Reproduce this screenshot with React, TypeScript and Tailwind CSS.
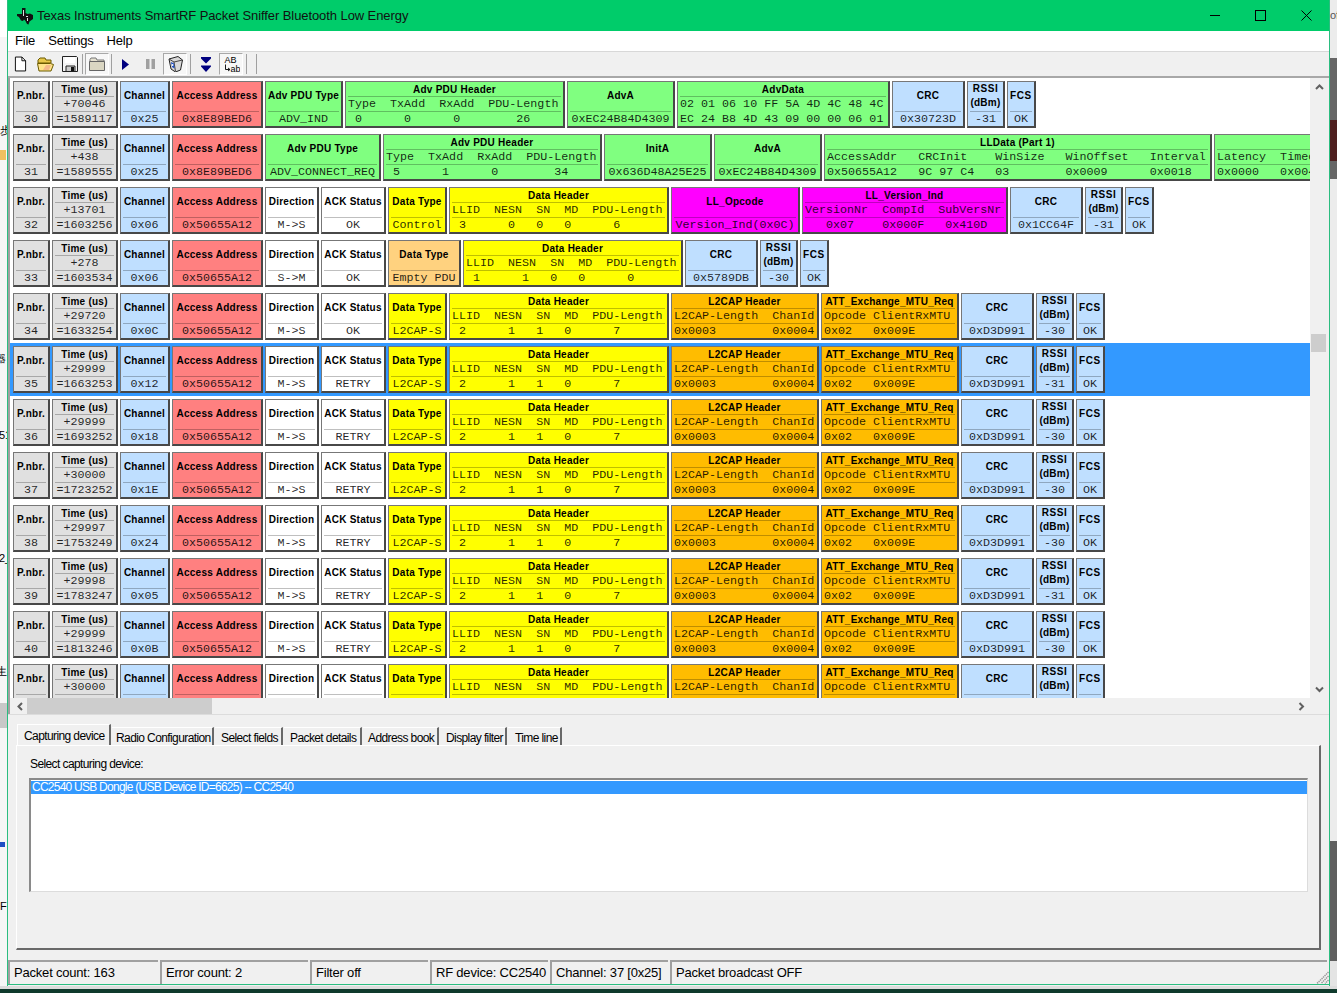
import React from 'react';

type Cell =
  | { kind: 'simple'; w: string; bg: string; title: React.ReactNode; value: string }
  | { kind: 'time'; delta: string; abs: string }
  | { kind: 'field'; w: string; bg: string; title: string; labels: string; values: string; noLine?: boolean };

const GRAY = 'bg-[#e0e0e0]';
const BLUE = 'bg-[#bfdfff]';
const RED = 'bg-[#ff8080]';
const GREEN = 'bg-[#80ff80]';
const WHITE = 'bg-white';
const YELLOW = 'bg-[#ffff00]';
const ORANGE = 'bg-[#ffbc00]';
const PEACH = 'bg-[#ffd27f]';
const MAGENTA = 'bg-[#ff00ff]';

const simple = (w: string, bg: string, title: React.ReactNode, value: string): Cell => ({ kind: 'simple', w, bg, title, value });
const field = (w: string, bg: string, title: string, labels: string, values: string, noLine?: boolean): Cell => ({ kind: 'field', w, bg, title, labels, values, noLine });

const rssiTitle = (
  <>
    <span className="block tracking-[0.6px]">RSSI</span>
    <span className="block">(dBm)</span>
  </>
);

const head = (n: number, delta: string, abs: string, ch: string, addr: string): Cell[] => [
  simple('w-[37px]', GRAY, 'P.nbr.', String(n)),
  { kind: 'time', delta, abs },
  simple('w-[50px]', BLUE, 'Channel', ch),
  simple('w-[91px]', RED, 'Access Address', addr),
];

const tail = (crc: string, rssi: string): Cell[] => [
  simple('w-[73px]', BLUE, 'CRC', crc),
  simple('w-[38px]', BLUE, rssiTitle, rssi),
  simple('w-[29px]', BLUE, <span className="tracking-[0.6px]">FCS</span>, 'OK'),
];

const link = (dir: string, ack: string): Cell[] => [
  simple('w-[54px]', WHITE, 'Direction', dir),
  simple('w-[65px]', WHITE, 'ACK Status', ack),
];

const dataHeader = (values: string): Cell =>
  field('w-[220px]', YELLOW, 'Data Header', 'LLID  NESN  SN  MD  PDU-Length', values);

const attRow = (n: number, delta: string, abs: string, ch: string, ack: string, rssi: string): Cell[] => [
  ...head(n, delta, abs, ch, '0x50655A12'),
  ...link('M->S', ack),
  simple('w-[59px]', YELLOW, 'Data Type', 'L2CAP-S'),
  dataHeader(' 2      1   1   0      7'),
  field('w-[148px]', ORANGE, 'L2CAP Header', 'L2CAP-Length  ChanId', '0x0003        0x0004'),
  field('w-[138px]', ORANGE, 'ATT_Exchange_MTU_Req', 'Opcode ClientRxMTU', '0x02   0x009E'),
  ...tail('0xD3D991', rssi),
];

const rows: { cells: Cell[]; selected?: boolean }[] = [
  {
    cells: [
      ...head(30, '+70046', '=1589117', '0x25', '0x8E89BED6'),
      simple('w-[78px]', GREEN, 'Adv PDU Type', 'ADV_IND'),
      field('w-[220px]', GREEN, 'Adv PDU Header', 'Type  TxAdd  RxAdd  PDU-Length', ' 0      0      0        26'),
      simple('w-[108px]', GREEN, 'AdvA', '0xEC24B84D4309'),
      field('w-[213px]', GREEN, 'AdvData', '02 01 06 10 FF 5A 4D 4C 48 4C', 'EC 24 B8 4D 43 09 00 00 06 01', true),
      ...tail('0x30723D', '-31'),
    ],
  },
  {
    cells: [
      ...head(31, '+438', '=1589555', '0x25', '0x8E89BED6'),
      simple('w-[116px]', GREEN, 'Adv PDU Type', 'ADV_CONNECT_REQ'),
      field('w-[219px]', GREEN, 'Adv PDU Header', 'Type  TxAdd  RxAdd  PDU-Length', ' 5      1      0        34'),
      simple('w-[108px]', GREEN, 'InitA', '0x636D48A25E25'),
      simple('w-[108px]', GREEN, 'AdvA', '0xEC24B84D4309'),
      field('w-[388px]', GREEN, 'LLData (Part 1)', 'AccessAddr   CRCInit    WinSize   WinOffset   Interval', '0x50655A12   9C 97 C4   03        0x0009      0x0018'),
      field('w-[200px]', GREEN, '', 'Latency  Timeout', '0x0000   0x0040'),
    ],
  },
  {
    cells: [
      ...head(32, '+13701', '=1603256', '0x06', '0x50655A12'),
      ...link('M->S', 'OK'),
      simple('w-[59px]', YELLOW, 'Data Type', 'Control'),
      dataHeader(' 3      0   0   0      6'),
      simple('w-[129px]', MAGENTA, 'LL_Opcode', 'Version_Ind(0x0C)'),
      field('w-[206px]', MAGENTA, 'LL_Version_Ind', 'VersionNr  CompId  SubVersNr', '   0x07    0x000F   0x410D'),
      ...tail('0x1CC64F', '-31'),
    ],
  },
  {
    cells: [
      ...head(33, '+278', '=1603534', '0x06', '0x50655A12'),
      ...link('S->M', 'OK'),
      simple('w-[73px]', PEACH, 'Data Type', 'Empty PDU'),
      dataHeader(' 1      1   0   0      0'),
      ...tail('0x5789DB', '-30'),
    ],
  },
  { cells: attRow(34, '+29720', '=1633254', '0x0C', 'OK', '-30') },
  { cells: attRow(35, '+29999', '=1663253', '0x12', 'RETRY', '-31'), selected: true },
  { cells: attRow(36, '+29999', '=1693252', '0x18', 'RETRY', '-30') },
  { cells: attRow(37, '+30000', '=1723252', '0x1E', 'RETRY', '-30') },
  { cells: attRow(38, '+29997', '=1753249', '0x24', 'RETRY', '-30') },
  { cells: attRow(39, '+29998', '=1783247', '0x05', 'RETRY', '-31') },
  { cells: attRow(40, '+29999', '=1813246', '0x0B', 'RETRY', '-30') },
  { cells: attRow(41, '+30000', '=1843246', '0x11', 'RETRY', '-30') },
];

const boxFrame =
  'shrink-0 h-[47px] flex flex-col px-[2px] border-t border-l border-t-[#777] border-l-[#777] border-r-2 border-b-2 border-r-[#484848] border-b-[#484848]';
const titleText = "font-bold text-[10px] tracking-[0.25px] text-black text-center font-['Liberation_Sans',sans-serif]";
const monoText = "font-['Liberation_Mono',monospace] text-[11.7px] leading-[14px] text-black/85 whitespace-pre h-[14px] overflow-hidden";
const Line = () => <div className="h-px shrink-0 bg-black/25" />;

function PacketCell({ cell }: { cell: Cell }) {
  if (cell.kind === 'time') {
    return (
      <div className={`${boxFrame} w-[66px] ${GRAY}`}>
        <div className={`${titleText} h-[14px] leading-[16px]`}>Time (us)</div>
        <Line />
        <div className={`${monoText} text-center`}>{cell.delta}</div>
        <Line />
        <div className={`${monoText} text-center`}>{cell.abs}</div>
      </div>
    );
  }
  if (cell.kind === 'simple') {
    return (
      <div className={`${boxFrame} ${cell.w} ${cell.bg}`}>
        <div className={`${titleText} h-[29px] pb-px leading-[14px] flex flex-col items-center justify-center whitespace-nowrap`}>{cell.title}</div>
        <Line />
        <div className={`${monoText} text-center`}>{cell.value}</div>
      </div>
    );
  }
  return (
    <div className={`${boxFrame} ${cell.w} ${cell.bg}`}>
      <div className={`${titleText} h-[14px] leading-[16px] whitespace-nowrap`}>{cell.title}</div>
      <Line />
      <div className={monoText}>{cell.labels}</div>
      {cell.noLine ? <div className="h-px shrink-0" /> : <Line />}
      <div className={monoText}>{cell.values}</div>
    </div>
  );
}

function TiLogo() {
  return (
    <svg width="18" height="18" viewBox="0 0 18 18" className="shrink-0">
      <path d="M6 1h3.500v5l2 1 2.500-.5 3 1.500v4l-3.500 2.500-1 3-1.500-.5-1.500-3-1.500-1.500-1 1.500-2-.5-2-3.500-2-1V7h5z" fill="#111" />
      <path d="M7 3h1v6H7zM10 9h2v1h-2zM11 11h1v3h-1z" fill="#ddd" />
    </svg>
  );
}

function WindowButtons() {
  return (
    <div className="ml-auto flex h-full">
      <div className="w-[46px] flex items-center justify-center">
        <div className="w-[10px] h-px bg-black" />
      </div>
      <div className="w-[45px] flex items-center justify-center">
        <div className="w-[11px] h-[11px] border border-black" />
      </div>
      <div className="w-[46px] flex items-center justify-center">
        <svg width="11" height="11" viewBox="0 0 11 11">
          <path d="M.5.500l10 10M10.500.500l-10 10" stroke="#000" strokeWidth="1" />
        </svg>
      </div>
    </div>
  );
}

const slot = 'w-[24px] h-[24px] shrink-0 flex items-center justify-center';
const pressed = 'w-[24px] h-[22px] shrink-0 flex items-center justify-center bg-[#f7f7f7] border border-t-[#a8a8a8] border-l-[#a8a8a8] border-r-white border-b-white';
const Sep = ({ className = '' }: { className?: string }) => <div className={`w-px h-[20px] bg-[#a0a0a0] shrink-0 ${className}`} />;

function Toolbar() {
  return (
    <div className="h-[24px] shrink-0 flex items-center bg-[#f0f0f0]">
      <div className={slot}>
        <svg width="13" height="16" viewBox="0 0 14 16">
          <path d="M1.500.500h7l4 4v11h-11z" fill="#fff" stroke="#000" />
          <path d="M8.500.500v4h4" fill="none" stroke="#000" />
        </svg>
      </div>
      <div className={`${slot} ml-px`}>
        <svg width="17" height="15" viewBox="0 0 17 15">
          <path d="M1 3l2-2h5l1 2h5v3H1z" fill="#e8c84a" stroke="#6b5a00" />
          <path d="M.5 6.500h13l3 1-2.500 6.500H2z" fill="#ffe48a" stroke="#6b5a00" />
          <path d="M9 8h5l-2 5H6z" fill="#f5b98a" />
        </svg>
      </div>
      <div className={`${slot} ml-px`}>
        <svg width="16" height="16" viewBox="0 0 16 16">
          <path d="M.500.500h14l1 1v14H.500z" fill="#f4f4f4" stroke="#222" />
          <path d="M3 1h10v6H3z" fill="#fff" />
          <path d="M4 10h9v5.500H4z" fill="#ccc" stroke="#222" />
          <path d="M9 11h3v4H9z" fill="#111" />
        </svg>
      </div>
      <Sep />
      <div className={`${pressed} ml-[2px]`}>
        <svg width="16" height="14" viewBox="0 0 16 14">
          <path d="M1 2.500l1-1.500h5l1 2h7v2H1z" fill="#e5e1d0" stroke="#777" />
          <path d="M.5 4.500h15v9H.5z" fill="#dad6c2" stroke="#666" />
        </svg>
      </div>
      <Sep className="ml-[2px]" />
      <div className={`${slot} ml-px`}>
        <svg width="7" height="11" viewBox="0 0 7 11">
          <path d="M0 0l7 5.500L0 11z" fill="#000080" />
        </svg>
      </div>
      <div className={`${slot} ml-px`}>
        <svg width="9" height="10" viewBox="0 0 9 10">
          <path d="M0 0h3.500v10H0zM5.500 0H9v10H5.500z" fill="#a0a0a0" />
        </svg>
      </div>
      <div className={`${pressed} ml-px`}>
        <svg width="15" height="16" viewBox="0 0 15 16">
          <path d="M1 3l9-2.500 4.500 3.500-2 10-5 2L3 13z" fill="#d8d8d8" stroke="#222" />
          <path d="M1 3l5 3 8.500-2M6 6l1.500 9.500" fill="none" stroke="#444" />
          <path d="M3 6l3 1.500.500 5-2.500-1.500z" fill="#1e4fc4" />
          <circle cx="4.500" cy="9" r="1" fill="#fff" />
        </svg>
      </div>
      <Sep className="ml-[3px]" />
      <div className={`${slot} ml-[3px]`}>
        <svg width="10" height="15" viewBox="0 0 10 15">
          <path d="M0 0h10v1.500L5 6.500 0 1.500zM0 8.500h10V9.500L5 15 0 9.500z" fill="#000080" />
        </svg>
      </div>
      <div className={`${pressed} ml-px`}>
        <svg width="18" height="18" viewBox="0 0 18 18">
          <text x="2.500" y="8" fontSize="9" fontFamily="Liberation Sans, sans-serif" fill="#000">AB</text>
          <text x="8.500" y="17" fontSize="9" fontFamily="Liberation Sans, sans-serif" fill="#000">ab</text>
          <path d="M3.500 9.500v5h4M6 13l2 1.500L6 16" fill="none" stroke="#000" strokeWidth="0.9" />
        </svg>
      </div>
      <Sep className="ml-[3px]" />
      <Sep className="ml-[9px]" />
    </div>
  );
}

function Chevron({ dir, className = '' }: { dir: 'up' | 'down' | 'left' | 'right'; className?: string }) {
  const d = {
    up: 'M1 5l3.500-3.500L8 5',
    down: 'M1 1.500L4.500 5 8 1.500',
    left: 'M5 1L1.500 4.500 5 8',
    right: 'M1.500 1L5 4.500 1.500 8',
  }[dir];
  const vertical = dir === 'up' || dir === 'down';
  return (
    <svg width={vertical ? 9 : 7} height={vertical ? 7 : 9} viewBox={vertical ? '0 0 9 7' : '0 0 7 9'} className={className}>
      <path d={d} fill="none" stroke="#606060" strokeWidth="2" />
    </svg>
  );
}

const tabs = [
  { label: 'Radio Configuration', c: 'w-[102px] pl-[4px]' },
  { label: 'Select fields', c: 'w-[68px] pl-[6px]' },
  { label: 'Packet details', c: 'w-[78px] pl-[6px]' },
  { label: 'Address book', c: 'w-[76px] pl-[5px]' },
  { label: 'Display filter', c: 'w-[67px] pl-[6px]' },
  { label: 'Time line', c: 'w-[54px] pl-[7px]' },
];

const status = [
  { label: 'Packet count: 163', w: 'w-[150px]' },
  { label: 'Error count: 2', w: 'w-[148px]' },
  { label: 'Filter off', w: 'w-[118px]' },
  { label: 'RF device: CC2540', w: 'w-[118px]' },
  { label: 'Channel: 37 [0x25]', w: 'w-[118px]' },
  { label: 'Packet broadcast OFF', w: 'flex-1' },
];

const uiText = 'text-[12px] tracking-[-0.6px] text-black';

export default function App() {
  return (
    <div className="w-[1337px] h-[993px] overflow-hidden flex flex-col bg-[#ededed] font-['Liberation_Sans',sans-serif]">
      <div className="h-[986px] flex shrink-0">
        {/* bits of the desktop behind the window */}
        <div className="relative w-[7px] shrink-0 overflow-hidden bg-[#f6f6f6]">
          <div className="h-[37px] bg-white" />
          <span className="absolute top-[125px] left-0 text-[11px] leading-none">步</span>
          <div className="absolute top-[150px] left-0 w-[6px] h-[10px] bg-[#f0c060]" />
          <span className="absolute top-[354px] left-[-4px] text-[10px] leading-none">器</span>
          <span className="absolute top-[430px] left-[-1px] text-[11px] leading-none">51</span>
          <span className="absolute top-[553px] left-[-1px] text-[11px] leading-none">2_</span>
          <span className="absolute top-[666px] left-[-4px] text-[11px] leading-none">生</span>
          <div className="absolute top-[703px] left-0 w-full h-[25px] bg-[#c8c8c8]" />
          <div className="absolute top-[842px] left-0 w-[5px] h-[5px] bg-[#1e4fc4]" />
          <span className="absolute top-[901px] left-0 text-[11px] leading-none">F:</span>
        </div>

        <div className="w-[1323px] shrink-0 flex flex-col border-x border-x-[#2bbd80] bg-[#f0f0f0]">
          <div className="h-[31px] shrink-0 flex items-center bg-[#00cc6a] pl-[8px]">
            <TiLogo />
            <span className="ml-[3px] text-[13px] text-[#111] tracking-[-0.08px]">Texas Instruments SmartRF Packet Sniffer Bluetooth Low Energy</span>
            <WindowButtons />
          </div>

          <div className="h-[20px] shrink-0 flex items-center gap-[13px] bg-white pl-[7px] text-[13px] tracking-[-0.2px] text-black">
            <span>File</span>
            <span>Settings</span>
            <span>Help</span>
          </div>
          <div className="h-px shrink-0 bg-[#d8d8d8]" />

          <Toolbar />
          <div className="h-[2px] shrink-0 bg-[#a8a8a8]" />

          <div className="h-[620px] shrink-0 flex">
            <div className="w-[1302px] shrink-0 overflow-hidden border-l-2 border-l-[#a0a0a0] bg-white">
              {rows.map((row, i) => (
                <div key={i} className={`h-[53px] flex gap-[2px] pt-[3px] pl-[3px] overflow-hidden ${row.selected ? 'bg-[#3399ff]' : ''}`}>
                  {row.cells.map((cell, j) => (
                    <PacketCell key={j} cell={cell} />
                  ))}
                </div>
              ))}
            </div>
            <div className="flex-1 flex flex-col items-start pl-px">
              <div className="w-[16px] h-[18px] flex items-center justify-center">
                <Chevron dir="up" />
              </div>
              <div className="w-[15px] h-[18px] mt-[238px] bg-[#cdcdcd]" />
              <div className="w-[16px] h-[18px] mt-auto flex items-center justify-center">
                <Chevron dir="down" />
              </div>
            </div>
          </div>

          <div className="h-[16px] shrink-0 flex items-center pl-[7px] pr-[24px] border-l-2 border-l-[#a0a0a0]">
            <Chevron dir="left" />
            <div className="w-[185px] h-full ml-[3px] bg-[#cdcdcd]" />
            <Chevron dir="right" className="ml-auto" />
          </div>
          <div className="h-px shrink-0 bg-[#dcdcdc]" />

          <div className="pl-[8px] pt-[9px] flex flex-col">
            <div className="flex items-end gap-px ml-px">
              <div className={`${uiText} w-[94px] h-[21px] pl-[6px] pt-[2px] bg-[#f0f0f0] border-t border-l border-t-white border-l-white border-r-2 border-r-[#696969]`}>
                Capturing device
              </div>
              {tabs.map((tab) => (
                <div key={tab.label} className={`${uiText} ${tab.c} h-[18px] pt-px bg-[#f0f0f0] border-t border-t-white border-r-2 border-r-[#696969] whitespace-nowrap overflow-hidden`}>
                  {tab.label}
                </div>
              ))}
            </div>
            <div className="w-[1305px] h-[205px] border-t border-l border-t-white border-l-white border-r-2 border-b-2 border-r-[#696969] border-b-[#696969] pl-[12px] pr-[11px]">
              <div className={`${uiText} mt-[11px] ml-px leading-[14px]`}>Select capturing device:</div>
              <div className="mt-[7px] h-[114px] bg-white border-t-2 border-l-2 border-t-[#8a8a8a] border-l-[#8a8a8a] border-r border-b border-r-[#dcdcdc] border-b-[#dcdcdc]">
                <div className="mt-px h-[13px] bg-[#3399ff] text-white text-[12px] tracking-[-0.75px] leading-[13px] pl-px whitespace-nowrap">
                  CC2540 USB Dongle (USB Device ID=6625) -- CC2540
                </div>
              </div>
            </div>
          </div>

          <div className="relative h-[24px] shrink-0 mt-[10px] flex text-[13px] tracking-[-0.2px] text-black">
            {status.map((s) => (
              <div key={s.label} className={`${s.w} mr-[2px] pl-[4px] pt-px border-t-2 border-l-2 border-t-[#a0a0a0] border-l-[#a0a0a0] leading-[20px] whitespace-nowrap overflow-hidden last:mr-0`}>
                {s.label}
              </div>
            ))}
            <svg width="13" height="13" viewBox="0 0 13 13" className="absolute right-0 bottom-0">
              <path d="M12.500 1L1 12.500M12.500 5L5 12.500M12.500 9L9 12.500" stroke="#9a9a9a" strokeWidth="1.500" strokeDasharray="1.400 0.700" fill="none" />
            </svg>
          </div>
          <div className="h-px shrink-0 bg-[#2bbd80]" />
        </div>

        <div className="flex-1 flex flex-col">
          <div className="h-[58px] bg-[#ececec] overflow-hidden text-[11px] leading-[31px] text-[#555]">of</div>
          <div className="h-[62px] bg-[#666]" />
          <div className="h-[41px] bg-[#4f1f1f]" />
          <div className="h-[18px] bg-[#666]" />
          <div className="h-[662px] bg-[#ececec]" />
          <div className="h-[120px] bg-[#5f5f5f]" />
          <div className="flex-1 bg-[#e4e4e4]" />
        </div>
      </div>
      <div className="h-[3px] shrink-0 bg-[#dcdcdc]" />
      <div className="flex-1 bg-[#0f3a2c]" />
    </div>
  );
}
